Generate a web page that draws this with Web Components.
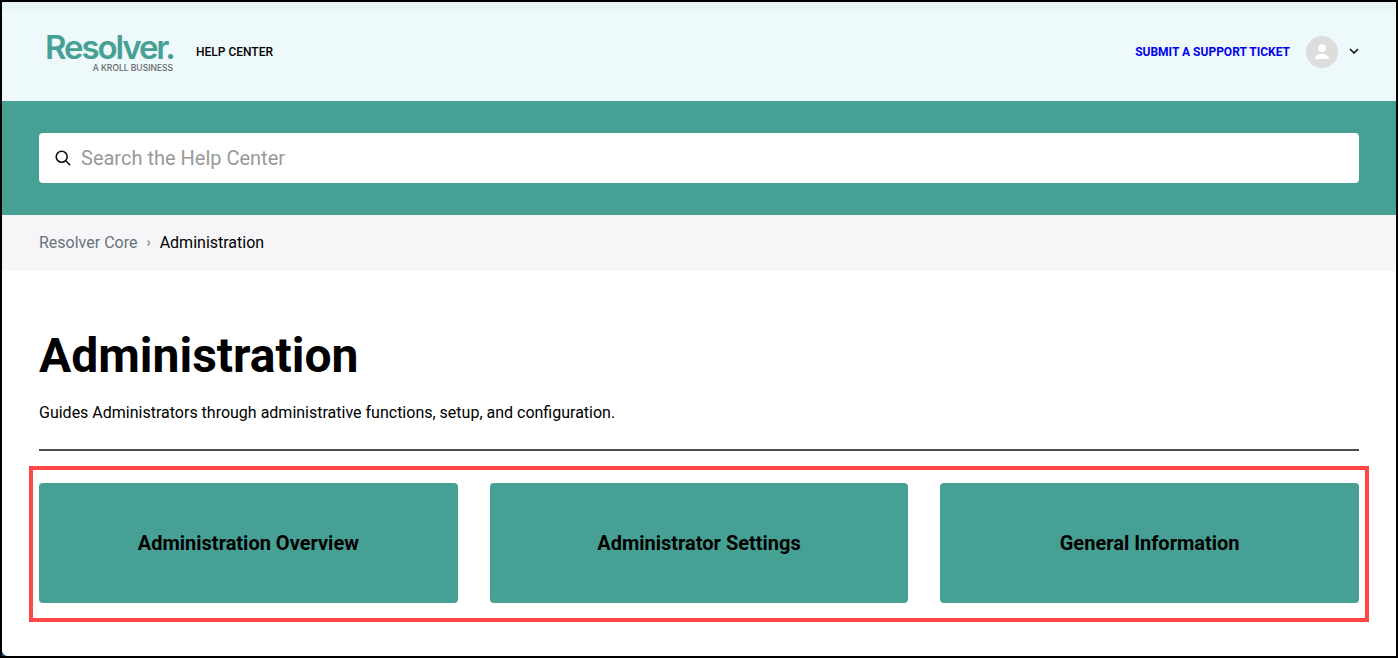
<!DOCTYPE html>
<html lang="en">
<head>
<meta charset="utf-8">
<title>Administration</title>
<style>
  html, body { margin: 0; padding: 0; background: #fff; }
  body { font-family: Roboto, "Liberation Sans", sans-serif; color: #000; }
</style>
</head>
<body>
<help-page>
  <site-header></site-header>
  <search-band></search-band>
  <bread-crumbs></bread-crumbs>
  <section-intro heading="Administration">Guides Administrators through administrative functions, setup, and configuration.</section-intro>
  <card-grid>
    <section-card>Administration Overview</section-card>
    <section-card>Administrator Settings</section-card>
    <section-card>General Information</section-card>
  </card-grid>
</help-page>

<script>
class HelpPage extends HTMLElement {
  constructor () {
    super()
    this.attachShadow({ mode: 'open' }).innerHTML = `
    <style>
      :host {
        background: #fff;
        border: 2px solid #000;
        box-sizing: border-box;
        display: block;
        height: 658px;
        overflow: hidden;
        position: relative;
        width: 1398px;
      }
      /* rounded window corner showing the desktop behind it */
      .corner {
        background: radial-gradient(circle at top right, transparent 5.5px, #0d5c8f 6.5px);
        bottom: 0;
        height: 6px;
        left: 0;
        position: absolute;
        width: 6px;
      }
    </style>
    <slot></slot>
    <div class="corner"></div>`
  }
}

class SiteHeader extends HTMLElement {
  constructor () {
    super()
    this.attachShadow({ mode: 'open' }).innerHTML = `
    <style>
      :host {
        align-items: center;
        background: linear-gradient(#e6f2f6, #eef9fb 12px);
        box-sizing: border-box;
        display: flex;
        height: 99px;
        justify-content: space-between;
        padding: 0 37px 0 43px;
      }
      .left, .right { align-items: center; display: flex; }
      .logo { color: #47a094; display: flex; flex-direction: column; margin-top: 3px; width: 128px; }
      .word {
        font-family: Inter, sans-serif;
        font-size: 33px;
        font-weight: 600;
        letter-spacing: -2.1px;
        line-height: 27px;
        white-space: nowrap;
      }
      .sub {
        color: #666;
        font-family: Inter, sans-serif;
        font-size: 8.5px;
        font-weight: 500;
        line-height: 9px;
        margin-top: 3px;
        text-align: right;
        white-space: nowrap;
      }
      .help { color: #000; font-size: 12px; font-weight: 500; margin-left: 23px; }
      .ticket { color: #0000ee; font-size: 12px; font-weight: 700; margin-right: 16px; }
      .avatar {
        align-items: center;
        background: #ddd;
        border-radius: 50%;
        display: flex;
        height: 32px;
        justify-content: center;
        width: 32px;
      }
      .chev { margin-left: 11px; margin-top: -2px; }
    </style>
    <div class="left">
      <div class="logo">
        <span class="word">Resolver.</span>
        <span class="sub">A KROLL BUSINESS</span>
      </div>
      <span class="help">HELP CENTER</span>
    </div>
    <div class="right">
      <span class="ticket">SUBMIT A SUPPORT TICKET</span>
      <span class="avatar">
        <svg width="16" height="16" viewBox="0 0 16 16" fill="#fff">
          <circle cx="8" cy="4.2" r="3.9"/>
          <path d="M1 15c0-3 3-5 7-5s7 2 7 5z"/>
        </svg>
      </span>
      <svg class="chev" width="10" height="6" viewBox="0 0 10 6" fill="none" stroke="#111" stroke-width="1.6">
        <path d="M1 1l4 4 4-4"/>
      </svg>
    </div>`
  }
}

class SearchBand extends HTMLElement {
  constructor () {
    super()
    this.attachShadow({ mode: 'open' }).innerHTML = `
    <style>
      :host {
        background: #47a094;
        box-sizing: border-box;
        display: block;
        height: 114px;
        padding: 32px 37px;
      }
      .box {
        align-items: center;
        background: #fff;
        border-radius: 4px;
        box-sizing: border-box;
        display: flex;
        gap: 10px;
        height: 50px;
        padding-left: 16px;
      }
      .hint { color: #999; font-size: 20px; }
    </style>
    <div class="box">
      <svg width="16" height="16" viewBox="0 0 16 16" fill="none" stroke="#111" stroke-width="1.6">
        <circle cx="6.7" cy="6.7" r="5.5"/>
        <path d="M10.8 10.8l4.4 4.4"/>
      </svg>
      <span class="hint">Search the Help Center</span>
    </div>`
  }
}

class BreadCrumbs extends HTMLElement {
  constructor () {
    super()
    this.attachShadow({ mode: 'open' }).innerHTML = `
    <style>
      :host {
        align-items: center;
        background: #f6f6f8;
        box-sizing: border-box;
        display: flex;
        font-size: 16px;
        height: 56px;
        padding: 0 0 2px 37px;
      }
      .link { color: #68737d; }
      .sep { color: #68737d; font-size: 14px; margin: 0 9px; }
      .here { color: #000; }
    </style>
    <span class="link">Resolver Core</span>
    <span class="sep">›</span>
    <span class="here">Administration</span>`
  }
}

class SectionIntro extends HTMLElement {
  constructor () {
    super()
    this.attachShadow({ mode: 'open' }).innerHTML = `
    <style>
      :host { display: block; padding: 57px 37px 0; }
      h1 { font-size: 48px; font-weight: 700; line-height: 56px; margin: 0; }
      p { font-size: 16px; line-height: 24px; margin: 17px 0 24px; }
      hr { background: #4c4c4c; border: 0; height: 2px; margin: 0; }
    </style>
    <h1></h1>
    <p><slot></slot></p>
    <hr>`
    this.shadowRoot.querySelector('h1').textContent = this.getAttribute('heading')
  }
}

class CardGrid extends HTMLElement {
  constructor () {
    super()
    this.attachShadow({ mode: 'open' }).innerHTML = `
    <style>
      :host {
        display: block;
        margin-top: 32px;
        padding: 0 37px;
        position: relative;
      }
      .cards { display: grid; gap: 32px; grid-template-columns: repeat(3, minmax(0, 1fr)); }
      .mark {
        border: 4px solid #ff4545;
        box-sizing: border-box;
        height: 156px;
        left: 27px;
        position: absolute;
        right: 27px;
        top: -17px;
      }
    </style>
    <div class="cards"><slot></slot></div>
    <div class="mark"></div>`
  }
}

class SectionCard extends HTMLElement {
  constructor () {
    super()
    this.attachShadow({ mode: 'open' }).innerHTML = `
    <style>
      :host {
        align-items: center;
        background: #47a094;
        border-radius: 4px;
        color: #000;
        display: flex;
        font-size: 20px;
        font-weight: 700;
        height: 120px;
        justify-content: center;
      }
    </style>
    <slot></slot>`
  }
}

customElements.define('help-page', HelpPage)
customElements.define('site-header', SiteHeader)
customElements.define('search-band', SearchBand)
customElements.define('bread-crumbs', BreadCrumbs)
customElements.define('section-intro', SectionIntro)
customElements.define('card-grid', CardGrid)
customElements.define('section-card', SectionCard)
</script>
</body>
</html>
